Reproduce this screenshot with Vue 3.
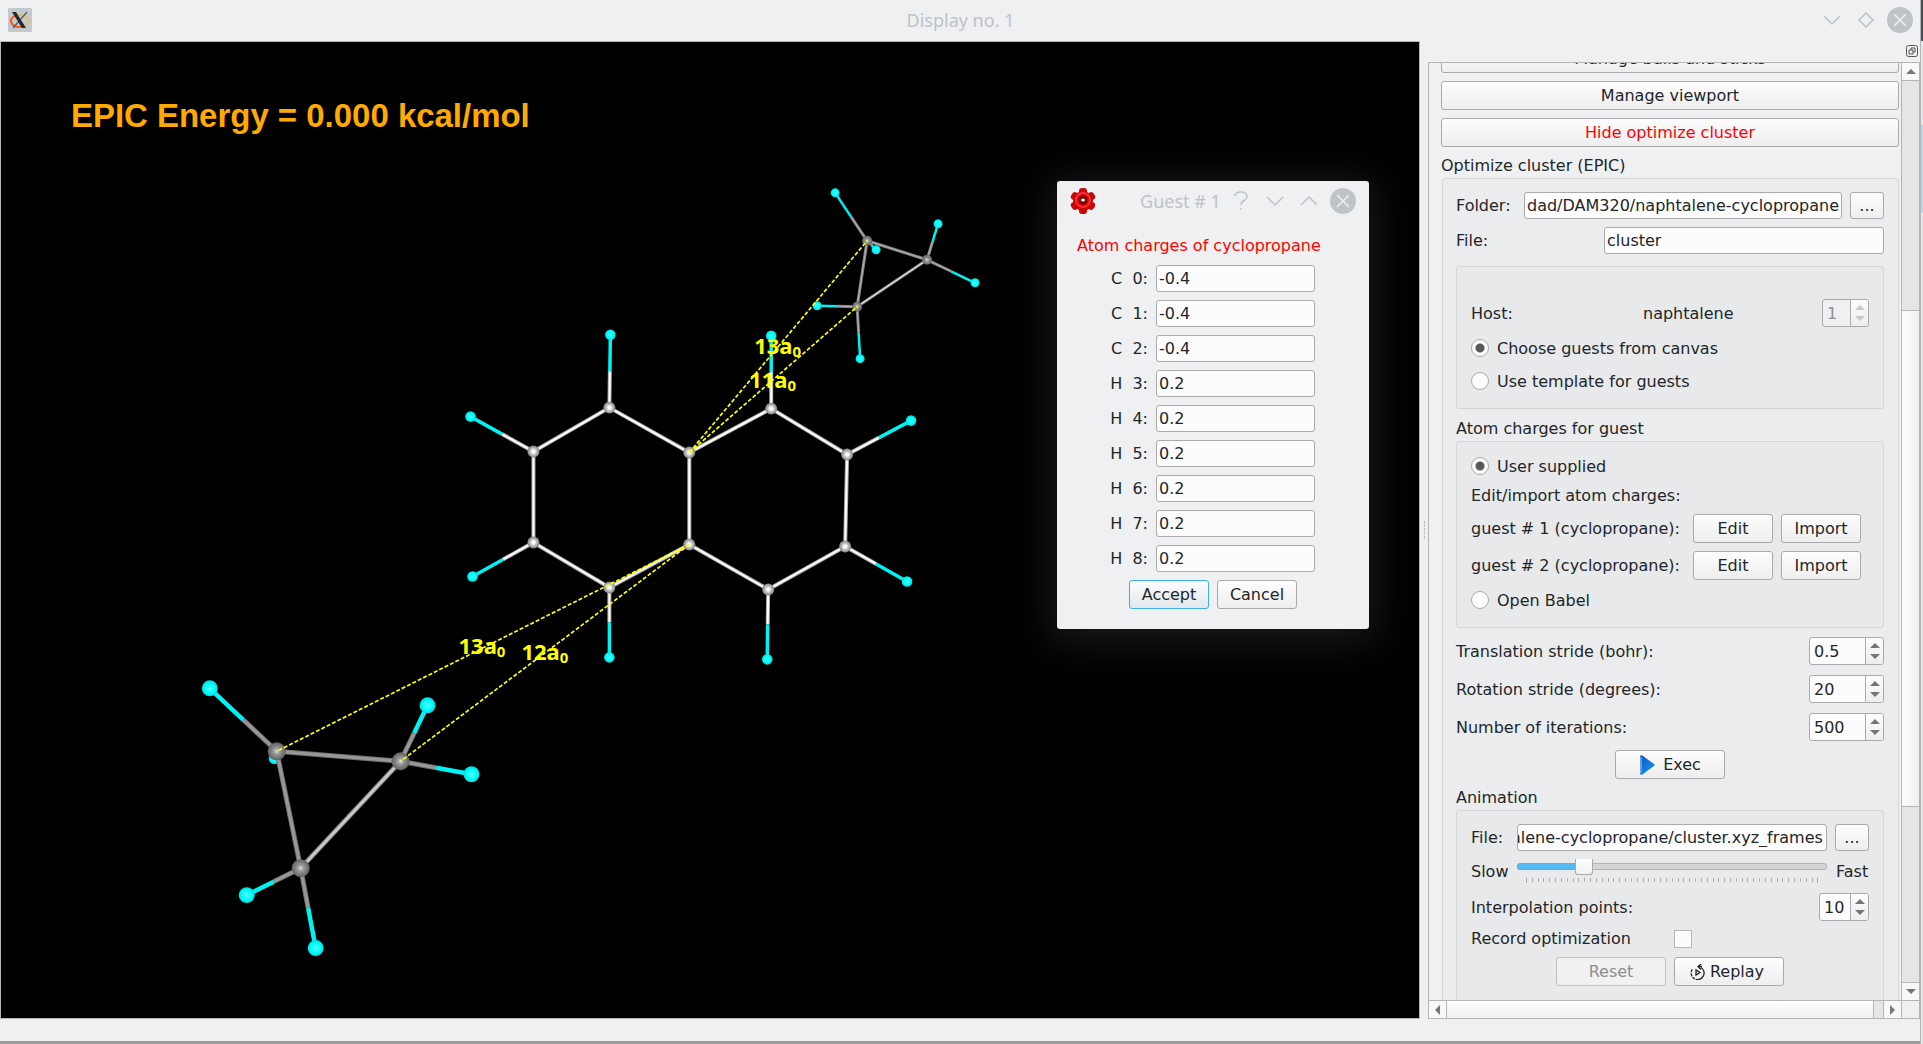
<script setup>
import { computed, onMounted, ref } from 'vue'

const folder = ref('dad/DAM320/naphtalene-cyclopropane')
const clusterFile = ref('cluster')
const framesFile = ref('alene-cyclopropane/cluster.xyz_frames')
const hostIndex = ref(1)
const guestSource = ref('canvas')
const chargeSource = ref('user')
const interpolation = ref(10)
const record = ref(false)
const speed = ref(20)

const guests = [1, 2]
const strides = ref([
  { id: 'translation', label: 'Translation stride (bohr):', value: 0.5 },
  { id: 'rotation', label: 'Rotation stride (degrees):', value: 20 },
  { id: 'iterations', label: 'Number of iterations:', value: 500 },
])

const charges = ref(
  ['C', 'C', 'C', 'H', 'H', 'H', 'H', 'H', 'H'].map((symbol, index) => ({
    symbol,
    index,
    value: symbol === 'C' ? '-0.4' : '0.2',
  })),
)

const speedFill = computed(() => {
  const stop = speed.value * 0.94 + 3
  return {
    backgroundImage: `linear-gradient(90deg, #52bbf2 ${stop}%, transparent ${stop}%)`,
  }
})

// Each molecule: carbons, hydrogens [x, y, index of its carbon], carbon-carbon bonds.
const molecules = [
  {
    name: 'host', cr: 6, hr: 5.3, width: 4, edge: '#a8a8a8', core: '#ffffff', lit: '#ffffff', fill: 'url(#carbon-light)',
    carbons: [[609, 408], [533, 452], [533, 543], [609, 588], [689, 545], [689, 453], [771, 409], [847, 455], [845, 547], [768, 590]],
    bonds: [[0, 1], [1, 2], [2, 3], [3, 4], [4, 5], [5, 0], [5, 6], [6, 7], [7, 8], [8, 9], [9, 4]],
    hydrogens: [[610, 335, 0], [470, 417, 1], [472, 577, 2], [609, 658, 3], [771, 336, 6], [911, 421, 7], [907, 582, 8], [767, 660, 9]],
  },
  {
    name: 'guest1', cr: 5, hr: 4.5, width: 3, edge: '#858585', core: '#b4b4b4', lit: '#ffffff', fill: 'url(#carbon-dark)',
    carbons: [[867, 241], [927, 260], [857, 307]],
    bonds: [[0, 1], [1, 2], [2, 0]],
    hydrogens: [[835, 193, 0], [876, 250, 0], [938, 224, 1], [975, 283, 1], [817, 306, 2], [860, 359, 2]],
  },
  {
    name: 'guest2', cr: 9, hr: 8, width: 5, edge: '#707070', core: '#989898', lit: '#c8c8c8', fill: 'url(#carbon-dark)',
    carbons: [[276, 752], [400, 762], [300, 869]],
    bonds: [[0, 1], [1, 2], [2, 0]],
    hydrogens: [[209, 689, 0], [274, 759, 0], [427, 706, 1], [471, 775, 1], [246, 896, 2], [315, 949, 2]],
  },
].map((m) => ({
  ...m,
  links: m.bonds.map(([a, b]) => [...m.carbons[a], ...m.carbons[b]]),
  arms: m.hydrogens.map(([x, y, c]) => {
    const [cx, cy] = m.carbons[c]
    return { x, y, cx, cy, mx: (x + cx) / 2, my: (y + cy) / 2 }
  }),
}))

const distances = [
  { line: [689, 453, 867, 241], x: 754, y: 354, text: '13a' },
  { line: [689, 453, 857, 307], x: 749, y: 388, text: '11a' },
  { line: [689, 545, 276, 752], x: 458, y: 655, text: '13a' },
  { line: [689, 545, 400, 762], x: 521, y: 661, text: '12a' },
]

const folderInput = ref(null)
const framesInput = ref(null)
onMounted(() => {
  for (const el of [folderInput.value, framesInput.value]) el.scrollLeft = el.scrollWidth
})
</script>

<template>
  <div class="screen">
    <div class="window">
      <header class="titlebar">
        <svg class="app-icon" viewBox="0 0 24 24">
          <rect width="24" height="24" rx="1" fill="#c3cacf" />
          <ellipse cx="12" cy="13" rx="9" ry="6" fill="none" stroke="#f0b860" stroke-width="1.5" />
          <path d="M14 18.500C8 20 3 17 3 13c0-3 3-5 6-5.500" fill="none" stroke="#f05a28" stroke-width="2" />
          <path d="M19 4 5 20" stroke="#555" stroke-width="1.200" />
          <path d="M4 4h4l10 16h-4z" fill="#26292c" />
        </svg>
        <h1>Display no. 1</h1>
        <div class="title-buttons">
          <button aria-label="Minimize"><svg viewBox="0 0 26 26"><path d="m5 9 8 8 8-8" /></svg></button>
          <button aria-label="Restore"><svg viewBox="0 0 26 26"><path d="m13 6 7 7-7 7-7-7z" /></svg></button>
          <button aria-label="Close"><svg viewBox="0 0 26 26"><circle cx="13" cy="13" r="13" /><path class="cross" d="m7 7 12 12M19 7 7 19" /></svg></button>
        </div>
      </header>

      <main class="body">
        <section class="canvas">
          <svg class="scene" viewBox="0 42 1418 977" preserveAspectRatio="xMinYMin meet">
            <defs>
              <radialGradient id="carbon-light"><stop offset="0.2" stop-color="#fff" /><stop offset="0.6" stop-color="#b8b8b8" /><stop offset="1" stop-color="#808080" /></radialGradient>
              <radialGradient id="carbon-dark"><stop offset="0" stop-color="#ddd" /><stop offset="0.35" stop-color="#999" /><stop offset="1" stop-color="#606060" /></radialGradient>
              <radialGradient id="hydrogen"><stop offset="0" stop-color="#5ff" /><stop offset="0.6" stop-color="#0ff" /><stop offset="1" stop-color="#00dada" /></radialGradient>
            </defs>
            <circle cx="274" cy="759" r="6" fill="url(#hydrogen)" />
            <g v-for="m in molecules" :key="m.name">
              <g v-for="(a, i) in m.arms" :key="'a' + i">
                <template v-if="!(m.name === 'guest2' && i === 1)">
                  <line :x1="a.cx" :y1="a.cy" :x2="a.mx" :y2="a.my" :stroke="m.edge" :stroke-width="m.width" />
                  <line :x1="a.cx" :y1="a.cy" :x2="a.mx" :y2="a.my" :stroke="m.core" :stroke-width="m.width - 2" />
                  <line :x1="a.mx" :y1="a.my" :x2="a.x" :y2="a.y" stroke="#00f2f2" :stroke-width="m.width - 0.5" />
                  <circle :cx="a.x" :cy="a.y" :r="m.hr" fill="url(#hydrogen)" />
                </template>
              </g>
              <g v-for="(l, i) in m.links" :key="'l' + i">
                <line :x1="l[0]" :y1="l[1]" :x2="l[2]" :y2="l[3]" :stroke="m.edge" :stroke-width="m.width" />
                <line :x1="l[0]" :y1="l[1]" :x2="l[2]" :y2="l[3]" :stroke="i === 1 ? m.lit : m.core" :stroke-width="m.width - 2" />
              </g>
              <circle v-for="(c, i) in m.carbons" :key="'c' + i" :cx="c[0]" :cy="c[1]" :r="m.cr" :fill="m.fill" />
            </g>
            <g v-for="(d, i) in distances" :key="i">
              <line class="dash" :x1="d.line[0]" :y1="d.line[1]" :x2="d.line[2]" :y2="d.line[3]" />
              <text class="distance" :x="d.x" :y="d.y">{{ d.text }}<tspan class="sub" dy="3">0</tspan></text>
            </g>
            <text class="energy" x="70" y="127">EPIC Energy = 0.000 kcal/mol</text>
          </svg>

          <form class="dialog" @submit.prevent>
            <header class="dialog-title">
              <svg class="gear" viewBox="0 0 26 26">
                <g fill="#c80808">
                  <circle cx="13" cy="13" r="10" />
                  <g v-for="n in 6" :key="n" :transform="`rotate(${n * 60} 13 13)`">
                    <rect x="9" y="0" width="8" height="7" rx="3" />
                  </g>
                </g>
                <circle cx="13" cy="12" r="7" fill="none" stroke="#f83030" stroke-width="2" />
                <circle cx="13" cy="12" r="4" fill="#700" />
                <ellipse cx="13" cy="12" rx="2" ry="1.500" fill="#fff" />
              </svg>
              <h2>Guest # 1</h2>
              <div class="title-buttons">
                <button type="button" aria-label="Help"><svg viewBox="0 0 26 26"><path d="M7 8c0-3 3-4 6-4s6 1 6 5c0 4-6 3-6 8m0 3v2" /></svg></button>
                <button type="button" aria-label="Minimize"><svg viewBox="0 0 26 26"><path d="m5 9 8 8 8-8" /></svg></button>
                <button type="button" aria-label="Maximize"><svg viewBox="0 0 26 26"><path d="m5 17 8-8 8 8" /></svg></button>
                <button type="button" aria-label="Close dialog"><svg viewBox="0 0 26 26"><circle cx="13" cy="13" r="13" /><path class="cross" d="m7 7 12 12M19 7 7 19" /></svg></button>
              </div>
            </header>
            <p class="dialog-heading">Atom charges of cyclopropane</p>
            <div class="charges">
              <div v-for="c in charges" :key="c.index" class="charge">
                <label :for="'charge' + c.index">{{ c.symbol }}&nbsp; {{ c.index }}:</label>
                <input :id="'charge' + c.index" v-model="c.value" class="field" type="text">
              </div>
            </div>
            <div class="row centered">
              <button class="btn small primary">Accept</button>
              <button type="button" class="btn small">Cancel</button>
            </div>
          </form>
        </section>

        <div class="splitter"><i></i></div>

        <aside class="dock">
          <div class="dock-title">
            <button aria-label="Float panel">
              <svg viewBox="0 0 12 12"><rect x="0.5" y="0.5" width="11" height="11" rx="2" /><path d="M5 5V3h4v4H7M3 5h4v4H3z" /></svg>
            </button>
          </div>
          <div class="scroll-area">
            <div class="viewport">
              <div class="content">
                <button class="btn">Manage balls and sticks</button>
                <button class="btn">Manage viewport</button>
                <button class="btn alert">Hide optimize cluster</button>

                <h3 class="group-title">Optimize cluster (EPIC)</h3>
                <div class="group outer">
                  <div class="row">
                    <label class="folder-label" for="folder">Folder:</label>
                    <input id="folder" ref="folderInput" v-model="folder" class="field grow" type="text">
                    <button class="btn dots">...</button>
                  </div>
                  <div class="row after-field">
                    <label for="cluster">File:</label>
                    <input id="cluster" v-model="clusterFile" class="field cluster" type="text">
                  </div>

                  <div class="group host">
                    <div class="row host-row">
                      <label class="host-label" for="host">Host:</label>
                      <span>naphtalene</span>
                      <div class="spin narrow disabled">
                        <input id="host" v-model="hostIndex" type="number" disabled>
                        <div class="steps"><button disabled aria-label="Next host" class="up"></button><button disabled aria-label="Previous host" class="down"></button></div>
                      </div>
                    </div>
                    <label class="radio"><input v-model="guestSource" type="radio" name="guests" value="canvas">Choose guests from canvas</label>
                    <label class="radio template"><input v-model="guestSource" type="radio" name="guests" value="template">Use template for guests</label>
                  </div>

                  <h3 class="group-title">Atom charges for guest</h3>
                  <div class="group guest">
                    <label class="radio"><input v-model="chargeSource" type="radio" name="charges" value="user">User supplied</label>
                    <p>Edit/import atom charges:</p>
                    <div v-for="g in guests" :key="g" class="row guest-row">
                      <span>guest # {{ g }} (cyclopropane):</span>
                      <button class="btn small">Edit</button>
                      <button class="btn small">Import</button>
                    </div>
                    <label class="radio"><input v-model="chargeSource" type="radio" name="charges" value="babel">Open Babel</label>
                  </div>

                  <div v-for="s in strides" :key="s.id" class="row stride">
                    <label :for="s.id">{{ s.label }}</label>
                    <div class="spin wide">
                      <input :id="s.id" v-model="s.value" type="number" step="any">
                      <div class="steps"><button aria-label="Increase" class="up" @click="s.value++"></button><button aria-label="Decrease" class="down" @click="s.value--"></button></div>
                    </div>
                  </div>
                  <div class="row centered exec">
                    <button class="btn medium">
                      <svg class="play" viewBox="0 0 16 20">
                        <defs><linearGradient id="play-fill" x2="1" y2="1"><stop stop-color="#0a55b8" /><stop offset="1" stop-color="#1e9bff" /></linearGradient></defs>
                        <path d="M1 2c0-2 2-2 3-1l11 8c1 1 1 1 0 2L4 19c-1 1-3 1-3-1z" fill="url(#play-fill)" />
                        <path d="M2 2v16" stroke="#7ab4ea" stroke-width="1.500" />
                      </svg>
                      Exec
                    </button>
                  </div>

                  <h3 class="group-title animation-title">Animation</h3>
                  <div class="group animation">
                    <div class="row">
                      <label class="frames-label" for="frames">File:</label>
                      <input id="frames" ref="framesInput" v-model="framesFile" class="field frames grow" type="text">
                      <button class="btn dots">...</button>
                    </div>
                    <div class="row speed">
                      <label class="frames-label" for="speed">Slow</label>
                      <div class="slider">
                        <input id="speed" v-model.number="speed" type="range" min="0" max="100" :style="speedFill">
                        <div class="ticks"><i v-for="n in 51" :key="n"></i></div>
                      </div>
                      <span class="fast">Fast</span>
                    </div>
                    <div class="row points">
                      <label for="points">Interpolation points:</label>
                      <div class="spin mid">
                        <input id="points" v-model="interpolation" type="number">
                        <div class="steps"><button aria-label="More points" class="up" @click="interpolation++"></button><button aria-label="Fewer points" class="down" @click="interpolation--"></button></div>
                      </div>
                    </div>
                    <div class="row record">
                      <label for="record">Record optimization</label>
                      <input id="record" v-model="record" class="check" type="checkbox">
                    </div>
                    <div class="row centered">
                      <button class="btn medium" disabled>Reset</button>
                      <button class="btn medium replay-button">
                        <svg class="replay" viewBox="0 0 16 16"><path d="M11 3.500A6.500 6.500 0 1 1 2.500 5" stroke-dasharray="18 1 3 1 3 1 3 1" /><path d="m11 0-3 2.500 3 3M8 2.500h4" /><path d="M6 6v5l4-2.500z" /></svg>
                        Replay
                      </button>
                    </div>
                  </div>
                </div>
              </div>
            </div>
            <div class="bar vertical"><button aria-label="Scroll up" class="up"></button><div class="track"><div class="thumb"></div></div><button aria-label="Scroll down" class="down"></button></div>
            <div class="bar horizontal"><button aria-label="Scroll left" class="left"></button><div class="track"><div class="thumb"></div></div><button aria-label="Scroll right" class="right"></button></div>
            <div class="corner"></div>
          </div>
        </aside>
      </main>
      <footer class="status"></footer>
    </div>
    <div class="backdrop"></div>
  </div>
</template>

<style>
body { background: #eff0f1; }
</style>

<style scoped>
* { box-sizing: border-box; }
.screen {
  display: flex;
  height: 100vh;
  overflow: hidden;
  color: #232629;
  font: 16px/19px "DejaVu Sans", sans-serif;
}
h1, h2, h3, p { margin: 0; font-weight: 400; }
button, input { font: inherit; color: inherit; }
.window { display: flex; flex: 1; flex-direction: column; min-width: 0; background: #eff0f1; border-bottom: 3px solid #9b9c9d; }
.backdrop { width: 3px; background: linear-gradient(#475057 41px, #e4e6e7 41px 125px, #b7d4e8 125px 213px, #e4e6e7 213px); border-left: 1px solid #b5b6b7; }

.titlebar { display: flex; align-items: center; justify-content: space-between; height: 41px; padding: 0 7px 1px 8px; }
.titlebar h1, .dialog-title h2 { color: #bdc3c7; font: 18px/24px "Noto Sans", sans-serif; }
.titlebar h1 { margin-left: 70px; }
.app-icon { width: 24px; height: 24px; }
.title-buttons { display: flex; gap: 8px; }
.title-buttons button { display: flex; width: 26px; height: 26px; padding: 0; border: 0; background: none; }
.title-buttons svg { width: 26px; height: 26px; fill: none; stroke: #bdc3c7; stroke-width: 1.5; }
.title-buttons circle { fill: #bdc3c7; stroke: none; }
.title-buttons .cross { stroke: #eff0f1; }

.body { display: flex; flex: 1; min-height: 0; }
.canvas { position: relative; flex: 1; min-width: 0; overflow: hidden; background: #000; border: 1px solid #b4b5b6; }
.scene { display: block; width: 100%; height: 100%; }
.dash { stroke: #ff0; stroke-width: 1.7; stroke-dasharray: 4 2; }
.distance { fill: #ff0; font: 700 22px "Noto Sans", sans-serif; }
.sub { font-size: 15px; }
.energy { fill: #ffaa00; font: 700 33px "Liberation Sans", sans-serif; }

.dialog { position: absolute; top: 139px; right: 50px; width: 312px; padding: 7px 13px 20px; background: #eff0f1; border-radius: 3px; box-shadow: 0 6px 40px 8px #17191b; }
.dialog-title { display: flex; align-items: center; justify-content: space-between; }
.gear { width: 26px; height: 26px; }
.dialog-title h2 { margin-left: 37px; }
.dialog-heading { padding: 22px 0 10px 7px; color: #f00; }
.charges { display: flex; flex-direction: column; gap: 8px; margin-bottom: 8px; }
.charge { display: flex; align-items: center; }
.charge label { width: 86px; padding-right: 8px; text-align: right; }
.charge .field { width: 159px; }

.splitter { display: flex; align-items: center; justify-content: center; width: 8px; }
.splitter i { width: 1px; height: 18px; border-left: 1px dotted #aaa; }
.dock { display: flex; flex-direction: column; width: 492px; }
.dock-title { display: flex; justify-content: flex-end; padding: 4px 2px 4px 0; height: 21px; }
.dock-title button { display: flex; padding: 0; border: 0; background: none; }
.dock-title svg { width: 12px; height: 12px; fill: none; stroke: #555; }
.scroll-area { display: grid; flex: 1; grid-template: minmax(0, 1fr) 18px / minmax(0, 1fr) 18px; min-height: 0; border: 1px solid #b4b5b6; }
.viewport { overflow: hidden; }
.content { display: flex; flex-direction: column; gap: 8px; margin-top: -19px; padding: 0 2px 0 12px; }

.btn { display: flex; align-items: center; justify-content: center; flex-shrink: 0; height: 29px; padding: 0; border: 1px solid #a9aaab; border-radius: 3px; background: linear-gradient(#fdfdfd, #eeeeee); }
.btn:disabled { color: #8c8e90; border-color: #c0c1c2; background: #f1f1f2; }
.btn.alert { color: #f00; }
.btn.small { width: 80px; }
.btn.medium { width: 110px; gap: 8px; }
.btn.dots { width: 34px; height: 27px; margin-left: 8px; }
.btn.primary { border-color: #3daee9; background: linear-gradient(#fcfdfd, #e2e8ee); }
.field { height: 27px; min-width: 0; padding: 0 2px; border: 1px solid #a9aaab; border-radius: 3px; background: #fcfcfc; outline: 0; }
.frames { padding: 0 3px 0 0; }
.grow { flex: 1; }
.row { display: flex; align-items: center; justify-content: space-between; }
.row.centered { justify-content: center; gap: 8px; }

.group-title { margin: 1px 0 -5px; font-size: 16px; line-height: 19px; }
.group { display: flex; flex-direction: column; border: 1px solid #d5d6d8; border-radius: 3px; }
.outer { margin-left: 1px; padding: 13px 14px 40px 13px; background: #ebecee; }
.outer .group-title { margin: 10px 0 3px; }
.outer .animation-title { margin-top: 9px; }
.outer .group { background: #e8e9eb; padding-inline: 14px; }
.folder-label { width: 68px; }
.after-field { margin: 8px 0 12px; }
.cluster { width: 280px; }
.host { padding-block: 32px 17px; }
.host-row { margin-bottom: 11px; }
.host-label { width: 172px; }
.radio { display: flex; align-items: center; gap: 8px; height: 20px; }
.radio input { width: 18px; height: 18px; margin: 0; appearance: none; border: 1px solid #a9aaab; border-radius: 50%; background: #fcfcfc; }
.radio input:checked { background: radial-gradient(circle, #56585a 4px, #fcfcfc 5px); }
.template { margin-top: 13px; }
.guest { margin-bottom: 9px; padding-block: 14px 17px; }
.guest p { margin: 10px 0 9px; }
.guest-row { gap: 8px; margin-bottom: 8px; padding-right: 8px; }
.guest-row span { flex: 1; }
.guest .radio:last-child { margin-top: 2px; }
.stride { margin-bottom: 10px; }
.exec { margin-top: -1px; }
.play { width: 16px; height: 20px; }
.replay { width: 16px; height: 16px; fill: none; stroke: #232629; stroke-width: 1.3; }
.btn.replay-button { gap: 4px; padding-right: 4px; }

.spin { display: flex; height: 28px; margin-left: auto; overflow: hidden; border: 1px solid #a9aaab; border-radius: 3px; background: #fcfcfc; }
.spin input { flex: 1; min-width: 0; padding: 0 0 0 4px; border: 0; background: none; outline: 0; appearance: textfield; }
.spin input::-webkit-inner-spin-button { appearance: none; margin: 0; }
.steps { display: flex; flex-direction: column; justify-content: center; gap: 2px; width: 18px; border-left: 1px solid #a9aaab; background: linear-gradient(#fdfdfd, #eeeeee); }
.steps button { display: flex; justify-content: center; height: 9px; padding: 2px 0; border: 0; background: none; }
.narrow { width: 47px; }
.mid { width: 50px; }
.wide { width: 75px; }
.spin.disabled { background: #eff0f1; color: #8c8e90; }
.up::before, .down::before, .left::before, .right::before { content: ""; border: 5px solid transparent; }
.up::before { border-top: 0; border-bottom-color: #737576; }
.down::before { border-bottom: 0; border-top-color: #737576; }
.left::before { border-left: 0; border-right-color: #737576; }
.right::before { border-right: 0; border-left-color: #737576; }
.disabled .up::before { border-bottom-color: #c8c9ca; }
.disabled .down::before { border-top-color: #c8c9ca; }

.animation { padding-block: 13px 40px; }
.frames-label { width: 46px; }
.speed { height: 24px; margin: 8px 0 10px; }
.slider { flex: 1; height: 24px; }
.slider input { display: block; width: 100%; height: 7px; margin: 4px 0 8px; appearance: none; border-radius: 3px; background-color: #d4d5d6; box-shadow: inset 0 0 0 1px #8d959a80; }
.slider input::-webkit-slider-thumb { appearance: none; width: 18px; height: 16px; border: 1px solid #a9aaab; border-top: 0; border-radius: 0 0 3px 3px; background: linear-gradient(#fdfdfd, #f1f1f1); }
.ticks { display: flex; justify-content: space-between; align-items: flex-start; padding: 0 8px 0 9px; }
.ticks i { width: 1px; height: 4px; background: #a9aaab; }
.ticks i:first-child, .ticks i:last-child { height: 5px; }
.fast { width: 42px; padding-left: 9px; }
.record { justify-content: flex-start; margin: 8px 0 9px; }
.record label { width: 203px; }
.check { width: 18px; height: 18px; margin: 0; appearance: none; border: 1px solid #b4b5b6; background: #fcfcfc; }

.bar { display: flex; background: #e4e6e6; }
.bar button { display: flex; align-items: center; justify-content: center; width: 17px; height: 17px; padding: 0; border: 0; background: #f8f8f8; }
.bar .track { display: flex; flex: 1; }
.vertical { flex-direction: column; border-left: 1px solid #b4b5b6; }
.vertical .track { flex-direction: column; border-block: 1px solid #b4b5b6; padding-top: 229px; }
.vertical .thumb { flex: 0 0 74%; border-block: 1px solid #b4b5b6; background: linear-gradient(90deg, #fdfdfd, #f0f0f0); }
.horizontal { border-top: 1px solid #b4b5b6; }
.horizontal .track { border-inline: 1px solid #b4b5b6; }
.horizontal .thumb { flex: 0 0 98%; border-right: 1px solid #b4b5b6; background: linear-gradient(#fdfdfd, #f0f0f0); }
.corner { border: solid #b4b5b6; border-width: 1px 0 0 1px; }
.status { height: 22px; }
</style>
